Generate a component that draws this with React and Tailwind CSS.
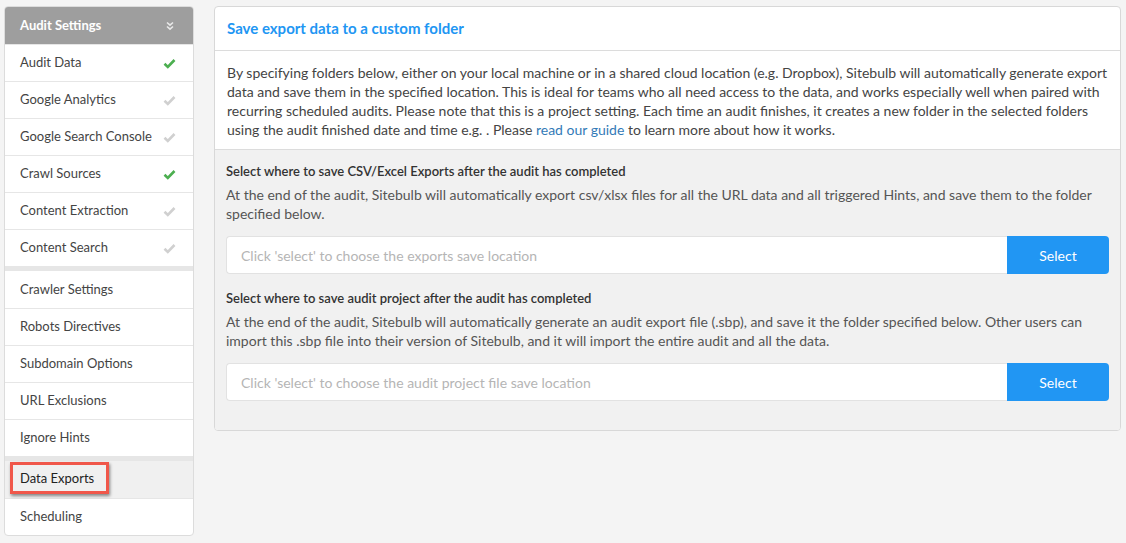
import React from "react";

const groups = [
  [
    { label: "Audit Data", check: "on" },
    { label: "Google Analytics", check: "off" },
    { label: "Google Search Console", check: "off" },
    { label: "Crawl Sources", check: "on" },
    { label: "Content Extraction", check: "off" },
    { label: "Content Search", check: "off" },
  ],
  [
    { label: "Crawler Settings" },
    { label: "Robots Directives" },
    { label: "Subdomain Options" },
    { label: "URL Exclusions" },
    { label: "Ignore Hints" },
  ],
  [{ label: "Data Exports", active: true }, { label: "Scheduling" }],
];

function Check({ on }) {
  return (
    <svg width="13" height="11" viewBox="0 0 13 11" className="mr-[17px]">
      <path d="M1.5 5.8 L4.8 9 L11.5 2" fill="none" stroke={on ? "#4caf50" : "#d0d0d0"} strokeWidth="2.6" />
    </svg>
  );
}

function Chevrons() {
  return (
    <svg width="10" height="10" viewBox="0 0 10 10" className="mr-[18px]">
      <path d="M2 1.5 L5 4.2 L8 1.5 M2 5.5 L5 8.2 L8 5.5" fill="none" stroke="#e8e8e8" strokeWidth="1.6" />
    </svg>
  );
}

function Sidebar() {
  return (
    <div className="w-[190px] shrink-0 rounded-[4px] border border-[#dcdcdc] bg-white overflow-hidden self-start">
      <div className="h-[37px] bg-[#9e9e9e] flex items-center justify-between pl-[15px]">
        <span className="text-[13px] font-bold text-white">Audit Settings</span>
        <Chevrons />
      </div>
      {groups.map((g, gi) => (
        <div key={gi} className={gi > 0 ? "border-t-[5px] border-[#e6e6e6]" : ""}>
          {g.map((it, i) => (
            <div
              key={it.label}
              className={
                "h-[37px] flex items-center justify-between pl-[15px] text-[13px] " +
                (i > 0 || gi === 0 ? "border-t border-[#e6e6e6] " : "") +
                (it.active ? "bg-[#f0f0f0] text-[#222]" : "text-[#444]")
              }
            >
              {it.active ? (
                <span className="-ml-[10px] -mt-[3px] pl-[7px] pr-[12px] py-[4px] border-[3px] border-[#f0574a] shadow-[1px_2px_3px_rgba(0,0,0,0.45)] leading-[18px]">
                  {it.label}
                </span>
              ) : (
                <span>{it.label}</span>
              )}
              {it.check && <Check on={it.check === "on"} />}
            </div>
          ))}
        </div>
      ))}
    </div>
  );
}

function PathField({ placeholder }) {
  return (
    <div className="flex h-[38px]">
      <div className="flex-1 flex items-center bg-white border border-[#e2e2e2] border-r-0 rounded-l-[4px] pl-[14px] text-[14px] text-[#b5b5b5]">
        {placeholder}
      </div>
      <button className="w-[102px] bg-[#2196f3] text-white text-[14px] rounded-r-[4px]">Select</button>
    </div>
  );
}

export default function App() {
  return (
    <div
      className="min-h-[543px] bg-[#f4f4f4] flex gap-[20px] pl-[4px] pr-[5px] pt-[6px] pb-[6px]"
      style={{ fontFamily: "Lato, 'Noto Sans', sans-serif" }}
    >
      <Sidebar />
      <div className="flex-1 self-start rounded-[4px] border border-[#d8d8d8] bg-white overflow-hidden">
        <div className="h-[44px] flex items-center pl-[12px] border-b border-[#dcdcdc]">
          <h2 className="text-[15px] font-bold text-[#2196f3]">Save export data to a custom folder</h2>
        </div>
        <div className="px-[12px] pt-[12px] pb-[10px] text-[14px] leading-[19px] text-[#444] border-b border-[#dcdcdc]">
          By specifying folders below, either on your local machine or in a shared cloud location (e.g. Dropbox), Sitebulb will
          automatically generate export data and save them in the specified location. This is ideal for teams who all need
          access to the data, and works especially well when paired with recurring scheduled audits. Please note that this is
          a project setting. Each time an audit finishes, it creates a new folder in the selected folders using the audit
          finished date and time e.g. . Please <span className="text-[#337ab7]">read our guide</span> to learn more about how it
          works.
        </div>
        <div className="bg-[#f1f1f1] px-[11px] pt-[12px] pb-[29px]">
          <div className="text-[13px] font-semibold text-[#333] leading-[19px]">
            Select where to save CSV/Excel Exports after the audit has completed
          </div>
          <p className="mt-[4px] text-[14px] leading-[19px] text-[#555]">
            At the end of the audit, Sitebulb will automatically export csv/xlsx files for all the URL data and all triggered
            Hints, and save them to the folder specified below.
          </p>
          <div className="mt-[13px]">
            <PathField placeholder="Click 'select' to choose the exports save location" />
          </div>
          <div className="mt-[15px] text-[13px] font-semibold text-[#333] leading-[19px]">
            Select where to save audit project after the audit has completed
          </div>
          <p className="mt-[4px] text-[14px] leading-[19px] text-[#555]">
            At the end of the audit, Sitebulb will automatically generate an audit export file (.sbp), and save it the folder
            specified below. Other users can import this .sbp file into their version of Sitebulb, and it will import the
            entire audit and all the data.
          </p>
          <div className="mt-[13px]">
            <PathField placeholder="Click 'select' to choose the audit project file save location" />
          </div>
        </div>
      </div>
    </div>
  );
}
